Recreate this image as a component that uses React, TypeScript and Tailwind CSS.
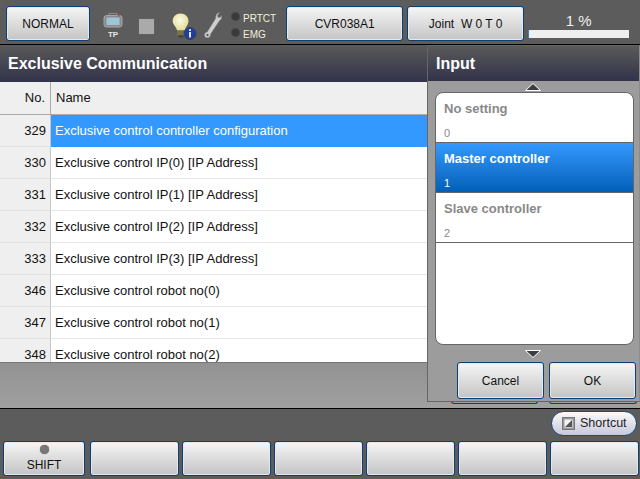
const FONT = "font-['Liberation_Sans',Arial,sans-serif]";

function Btn({ className = "", children }: { className?: string; children?: React.ReactNode }) {
  return (
    <div className={`flex shrink-0 flex-col items-center justify-center rounded-[3px] border border-[#0a3f78] bg-gradient-to-b from-[#f6f6f6] to-[#c4c4c4] text-[12px] text-[#111] shadow-[inset_0_0_0_1px_#e8e8e8] ${className}`}>
      {children}
    </div>
  );
}

function TpIcon() {
  return (
    <div className="flex w-[20px] flex-col items-center">
      <svg width="20" height="15" viewBox="0 0 20 15">
        <rect x="6" y="0.5" width="8" height="3" fill="none" stroke="#8a8a8a" />
        <rect x="1" y="2.5" width="18" height="11.5" rx="2.5" fill="#8a8a8a" stroke="#a8a8a8" />
        <rect x="3.5" y="4.5" width="13" height="7.500" fill="#9cc6d6" />
        <rect x="14.5" y="1.5" width="2" height="2" fill="#d04040" />
      </svg>
      <span className="mt-[2px] text-[8px] leading-[9px] font-bold text-[#e8e8e8]">TP</span>
    </div>
  );
}

function BulbIcon() {
  return (
    <svg width="26" height="27" viewBox="0 0 26 27" className="block">
      <defs>
        <radialGradient id="bulb" cx="0.45" cy="0.4" r="0.7">
          <stop offset="0" stopColor="#fdfbe2" />
          <stop offset="1" stopColor="#dcd68a" />
        </radialGradient>
      </defs>
      <path d="M8.500 0.500c4.600 0 8 3.300 8 7.600 0 3.700-2.800 5.600-3.600 9.400H5.100C4.300 13.700 0.700 11.800 0.700 8.100 0.700 3.800 3.900 0.500 8.500 0.500z" fill="url(#bulb)" />
      <rect x="5" y="17.500" width="8" height="5" rx="1" fill="#77724c" />
      <rect x="6.500" y="22.500" width="5" height="1.800" fill="#3f3f30" />
      <circle cx="18" cy="20.500" r="6" fill="#1f3f9c" stroke="#3a3f6c" />
      <rect x="17" y="19" width="2" height="5.500" fill="#dfe6ff" />
      <rect x="17" y="16.200" width="2" height="1.800" fill="#dfe6ff" />
    </svg>
  );
}

function WrenchIcon() {
  return (
    <svg width="18" height="26" viewBox="0 0 18 26" className="block">
      <path d="M15.500 .5l-2.200 3 .7 2 2.100.1 1.400-1.900c.5 2-.2 4-1.900 4.800L6.500 22c.4 2-1 3.700-3 3.700S0 24 .6 22.200c.4-1.300 1.500-2.100 2.700-2.200L11.800 6.300C11.300 3.500 13 1 15.500 .5z" fill="#cfcfcf" stroke="#8a8a8a" strokeWidth="0.500" />
      <circle cx="3.500" cy="23" r="1.200" fill="#5c5c5c" />
    </svg>
  );
}

function Lamp({ label }: { label: string }) {
  return (
    <div className="flex h-[16px] items-start gap-[3px]">
      <div className="h-[9px] w-[9px] rounded-full border border-[#444] bg-[#3a3a3a]" />
      <span className="mt-[1px] text-[10px] leading-[12px] text-[#f2f0d8]">{label}</span>
    </div>
  );
}

function TopBar() {
  return (
    <div className="flex h-[45px] shrink-0 items-start border-b border-black bg-[#5c5c5c] pl-[6px]">
      <Btn className="mt-[6px] h-[35px] w-[84px]">NORMAL</Btn>
      <div className="ml-[13px] mt-[13px]"><TpIcon /></div>
      <div className="ml-[16px] mt-[19px] h-[15px] w-[15px] bg-[#aaaaaa] shadow-[0_0_1px_#777]" />
      <div className="ml-[18px] mt-[13px]"><BulbIcon /></div>
      <div className="ml-[6px] mt-[12px]"><WrenchIcon /></div>
      <div className="ml-[9px] mt-[12px] flex flex-col">
        <Lamp label="PRTCT" />
        <Lamp label="EMG" />
      </div>
      <Btn className="ml-[10px] mt-[6px] h-[35px] w-[117px]">CVR038A1</Btn>
      <Btn className="ml-[4px] mt-[6px] h-[35px] w-[117px]">Joint&nbsp; W 0 T 0</Btn>
      <div className="ml-[4px] mt-[12px] flex w-[101px] flex-col items-center">
        <span className="text-[15px] leading-[18px] text-[#f0f0f0]">1 %</span>
        <div className="h-[8px] w-full bg-[#efefef]">
          <div className="h-full w-[1px] bg-[#3a7fd0]" />
        </div>
      </div>
    </div>
  );
}

const rows: [string, string][] = [
  ["329", "Exclusive control controller configuration"],
  ["330", "Exclusive control IP(0) [IP Address]"],
  ["331", "Exclusive control IP(1) [IP Address]"],
  ["332", "Exclusive control IP(2) [IP Address]"],
  ["333", "Exclusive control IP(3) [IP Address]"],
  ["346", "Exclusive control robot no(0)"],
  ["347", "Exclusive control robot no(1)"],
  ["348", "Exclusive control robot no(2)"],
];

function TitleBar({ text, className = "" }: { text: string; className?: string }) {
  return (
    <div className={`flex shrink-0 items-center bg-gradient-to-b from-[#5a5a5a] to-[#32324a] text-[16px] font-bold text-white ${className}`}>
      {text}
    </div>
  );
}

function Table() {
  return (
    <div className="h-[281px] shrink-0 overflow-hidden border-b border-[#777] text-[13px] text-[#111]">
      <div className="flex h-[33px] border-b border-[#aaa] bg-[#efefef] pl-[1px]">
        <div className="flex w-[50px] items-center justify-end border-r border-[#aaa] pr-[5px]">No.</div>
        <div className="flex items-center pl-[5px]">Name</div>
      </div>
      {rows.map(([no, name], i) => (
        <div key={no} className="flex h-[32px]">
          <div className="flex w-[51px] items-center justify-end border-r border-b border-[#c8c8c8] border-b-[#e2e2e2] bg-[#efefef] pr-[4px]">{no}</div>
          <div className={`flex flex-1 items-center pl-[4px] ${i === 0 ? "bg-[#3399ff] text-white" : "border-b border-[#e6e6e6] bg-white"}`}>{name}</div>
        </div>
      ))}
    </div>
  );
}

function Option({ title, value, active }: { title: string; value: string; active?: boolean }) {
  return (
    <div className={`flex h-[50px] flex-col justify-between border-b border-[#666] pb-[3px] pl-[8px] pt-[8px] ${active ? "bg-gradient-to-b from-[#3399ff] to-[#0060b8] text-white" : "text-[#888]"}`}>
      <span className="text-[13px] leading-[15px] font-bold">{title}</span>
      <span className="text-[11px] leading-[12px]">{value}</span>
    </div>
  );
}

function InputPanel() {
  return (
    <div className="absolute left-[427px] top-[45px] flex h-[357px] w-[213px] flex-col border border-[#666] border-r-[#8c8c8c] bg-[#9c9c9c]">
      <TitleBar text="Input" className="h-[35px] pl-[8px]" />
      <div className="flex h-[11px] items-center justify-center pr-[1px]">
        <svg width="16" height="8" viewBox="0 0 16 8"><path d="M8 .500 15.500 7.500H.500z" fill="#3d3d3d" stroke="#fff" /></svg>
      </div>
      <div className="ml-[7px] h-[253px] w-[199px] shrink-0 overflow-hidden rounded-[8px] border border-[#666] bg-white">
        <Option title="No setting" value="0" />
        <Option title="Master controller" value="1" active />
        <Option title="Slave controller" value="2" />
      </div>
      <div className="flex h-[17px] shrink-0 items-center justify-center pr-[1px]">
        <svg width="16" height="8" viewBox="0 0 16 8"><path d="M8 7.500 15.500 .500H.500z" fill="#3d3d3d" stroke="#fff" /></svg>
      </div>
      <div className="ml-[29px] flex gap-[5px]">
        <Btn className="h-[37px] w-[87px]">Cancel</Btn>
        <Btn className="h-[37px] w-[87px]">OK</Btn>
      </div>
    </div>
  );
}

function BottomBar() {
  return (
    <div className="flex h-[71px] shrink-0 flex-col border-t border-black bg-[#5c5c5c]">
      <div className="flex h-[32px] shrink-0 items-start justify-end pr-[3px] pt-[2px]">
        <div className="flex h-[25px] w-[86px] items-center gap-[5px] rounded-full border border-[#1f4a78] bg-gradient-to-b from-[#fafafa] to-[#c8c8dc] pl-[10px] text-[12.5px] text-[#222]">
          <svg width="13" height="13" viewBox="0 0 13 13" className="shrink-0">
            <rect x="0.500" y="0.500" width="12" height="12" fill="#9a9a9a" stroke="#777" />
            <rect x="2.500" y="2.500" width="8" height="8" fill="#f4f4f4" />
            <path d="M3 10 10 3v7z" fill="#555" />
          </svg>
          Shortcut
        </div>
      </div>
      <div className="flex pl-[3px]">
        <Btn className="h-[35px] w-[82px]">
          <div className="h-[9px] w-[9px] rounded-full bg-[#777] shadow-[0_0_1px_#555]" />
          <span className="mt-[4px] leading-[14px]">SHIFT</span>
        </Btn>
        <div className="ml-[5px] flex gap-[3px]">
          {[0, 1, 2, 3, 4, 5].map((k) => (
            <Btn key={k} className="h-[35px] w-[89px]" />
          ))}
        </div>
      </div>
    </div>
  );
}

export default function App() {
  return (
    <div className={`relative flex h-[479px] w-[640px] flex-col overflow-hidden bg-[#9c9c9c] ${FONT}`}>
      <TopBar />
      <TitleBar text="Exclusive Communication" className="h-[37px] pl-[8px]" />
      <Table />
      <div className="flex-1 bg-gradient-to-b from-[#929292] to-[#a0a0a0]" />
      <BottomBar />
      <div className="absolute left-[451px] top-[400px] flex gap-[11px]">
        <div className="h-[4px] w-[87px] rounded-b-[3px] border border-t-0 border-[#0a3f78]" />
        <div className="h-[4px] w-[88px] rounded-b-[3px] border border-t-0 border-[#0a3f78]" />
      </div>
      <InputPanel />
    </div>
  );
}
